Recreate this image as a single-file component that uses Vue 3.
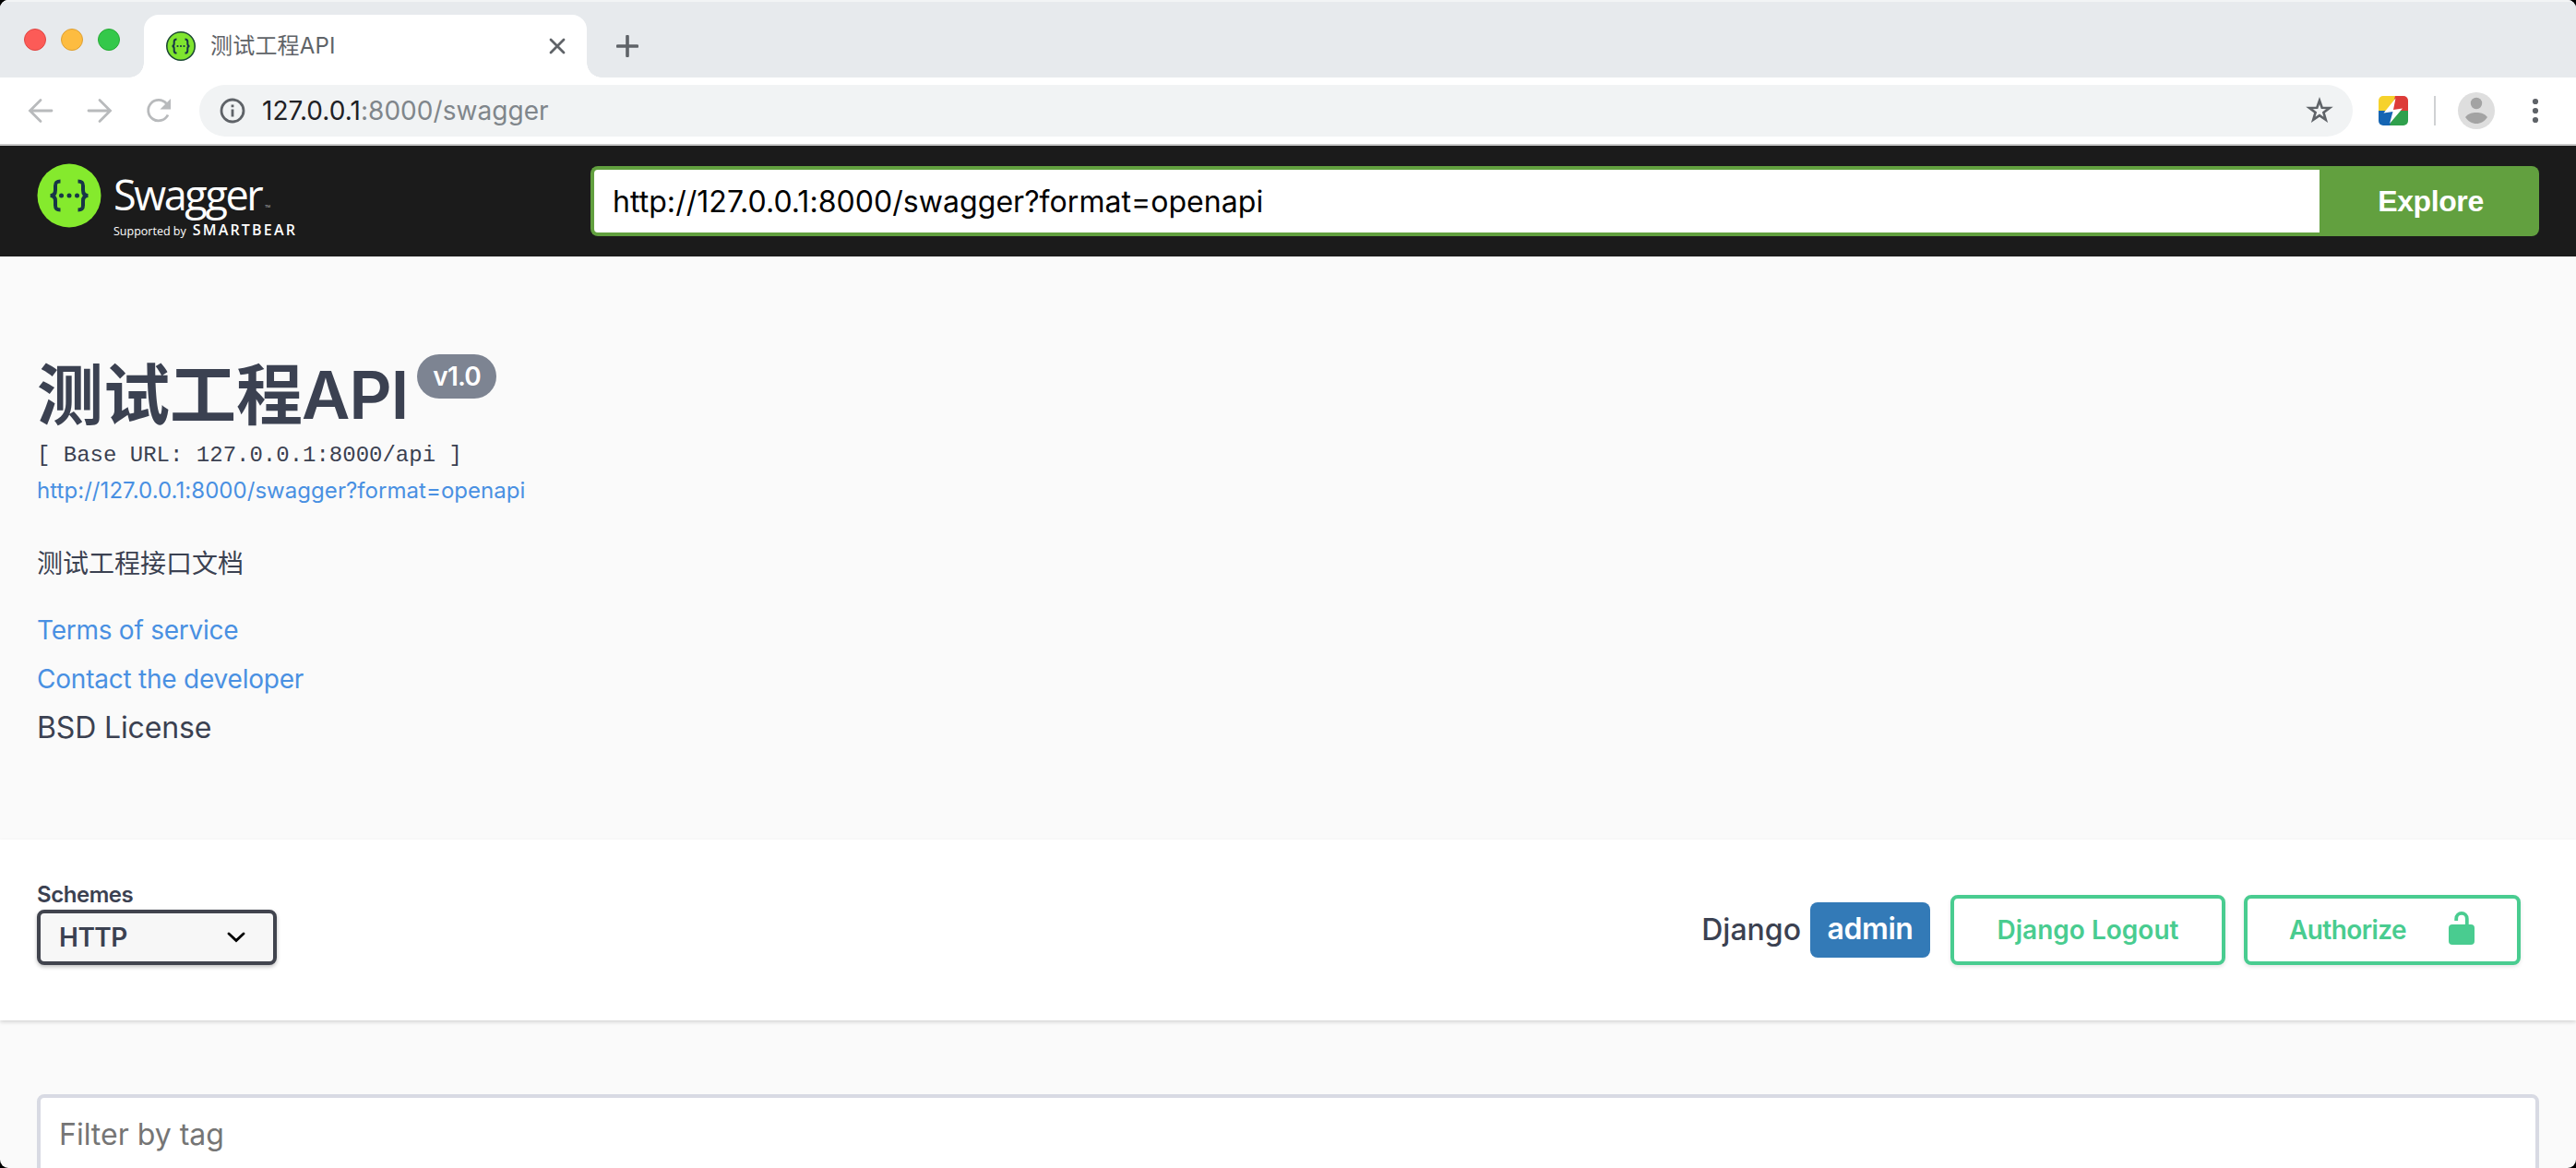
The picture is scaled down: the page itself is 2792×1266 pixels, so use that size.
<template>
  <div class="window">
    <div class="tab-strip">
      <div class="lights">
        <span class="light red"></span>
        <span class="light yellow"></span>
        <span class="light green"></span>
      </div>
      <div class="tab">
        <svg class="favicon" viewBox="0 0 34 34">
          <circle cx="17" cy="17" r="15.2" fill="#7fe52f" stroke="#1d4a35" stroke-width="1.6" />
          <g fill="none" stroke="#173647" stroke-width="2">
            <path d="M12.500 9.500c-2.600 0-2.800 1-2.800 2.600v2.200c0 1.600-.5 2.700-2.200 2.700 1.700 0 2.200 1.100 2.200 2.700v2.200c0 1.600.2 2.600 2.800 2.600" />
            <path d="M21.500 9.500c2.600 0 2.800 1 2.800 2.600v2.200c0 1.600.5 2.700 2.200 2.700-1.700 0-2.200 1.100-2.200 2.700v2.200c0 1.600-.2 2.600-2.800 2.600" />
          </g>
          <g fill="#173647">
            <circle cx="13.500" cy="17" r="1.100" />
            <circle cx="17" cy="17" r="1.100" />
            <circle cx="20.500" cy="17" r="1.100" />
          </g>
        </svg>
        <span class="tab-title">测试工程API</span>
        <svg class="tab-close" viewBox="0 0 18 18">
          <path d="M2 2l14 14M16 2L2 16" stroke="#5f6368" stroke-width="2.800" stroke-linecap="round" />
        </svg>
      </div>
      <svg class="new-tab" viewBox="0 0 24 24">
        <path d="M12 1.500v21M1.500 12h21" stroke="#5f6368" stroke-width="3.600" stroke-linecap="round" />
      </svg>
    </div>

    <div class="toolbar">
      <svg class="nav" viewBox="0 0 28 28">
        <path d="M26 14H3M14 2.500L2.500 14 14 25.500" fill="none" stroke="#b8babc" stroke-width="2.800" stroke-linecap="round" />
      </svg>
      <svg class="nav" viewBox="0 0 28 28">
        <path d="M2 14h23M14 2.500L25.500 14 14 25.500" fill="none" stroke="#b8babc" stroke-width="2.800" stroke-linecap="round" />
      </svg>
      <svg class="nav" viewBox="0 0 28 28">
        <path d="M24 18.500A11.200 11.200 0 1 1 22.500 6.500" fill="none" stroke="#b8babc" stroke-width="2.800" />
        <path d="M27 1v11.500H15.500z" fill="#b8babc" />
      </svg>
      <div class="omnibox">
        <svg class="info-icon" viewBox="0 0 28 28">
          <circle cx="14" cy="14" r="12" fill="none" stroke="#5f6368" stroke-width="2.800" />
          <path d="M14 12.500v8M14 7.500v2.800" stroke="#5f6368" stroke-width="2.800" />
        </svg>
        <span class="address">127.0.0.1<span class="address-rest">:8000/swagger</span></span>
        <svg class="star" viewBox="0 0 30 30">
          <path d="M15 4l2.700 7.700 8.300.2-6.600 5 2.400 8L15 20.200l-6.800 4.700 2.400-8-6.600-5 8.300-.2z" fill="none" stroke="#5f6368" stroke-width="2.600" />
        </svg>
      </div>
      <svg class="extension" viewBox="0 0 32 32">
        <clipPath id="ext"><rect width="32" height="32" rx="5" /></clipPath>
        <g clip-path="url(#ext)">
          <path d="M0 0h19v16H0z" fill="#f6d22b" />
          <path d="M18 0h14v16H14z" fill="#dd3b38" />
          <path d="M0 16h16v16H0z" fill="#1565b3" />
          <path d="M18 16h14v16H12z" fill="#2fa04c" />
          <path d="M18.500 2.500L5.500 18.500l10-1.500L12 30l14-16.500-10 1.500z" fill="#fff" />
        </g>
      </svg>
      <span class="divider"></span>
      <svg class="avatar" viewBox="0 0 40 40">
        <circle cx="20" cy="20" r="20" fill="#dedede" />
        <circle cx="20" cy="12" r="6.200" fill="#a3a3a3" />
        <path d="M8 27c3-3.800 7.500-5 12-5s9 1.200 12 5c-3 4.500-7.500 7-12 7s-9-2.500-12-7z" fill="#a3a3a3" />
      </svg>
      <svg class="more" viewBox="0 0 8 28">
        <circle cx="4" cy="4" r="3.100" />
        <circle cx="4" cy="14" r="3.100" />
        <circle cx="4" cy="24" r="3.100" />
      </svg>
    </div>

    <div class="topbar">
      <div class="logo">
        <svg class="logo-mark" viewBox="0 0 70 70">
          <circle cx="35" cy="35" r="34.500" fill="#85ea2d" />
          <g fill="none" stroke="#173647" stroke-width="4">
            <path d="M25.500 19.500c-5 0-5.500 2-5.500 5v4.500c0 3.500-1.500 6-5.500 6 4 0 5.500 2.500 5.500 6v4.500c0 3 .5 5 5.500 5" />
            <path d="M44.500 19.500c5 0 5.500 2 5.500 5v4.500c0 3.500 1.500 6 5.500 6-4 0-5.500 2.500-5.500 6v4.500c0 3-.5 5-5.500 5" />
          </g>
          <g fill="#173647">
            <circle cx="26.500" cy="35" r="2.500" />
            <circle cx="35" cy="35" r="2.500" />
            <circle cx="43.500" cy="35" r="2.500" />
          </g>
        </svg>
        <div class="logo-text">
          <div class="logo-name">Swagger<span class="tm">™</span></div>
          <div class="logo-sub">Supported by <span class="smartbear">SMARTBEAR</span></div>
        </div>
      </div>
      <div class="download-url">
        <input v-model="url" class="url-input" type="text" />
        <button class="explore">Explore</button>
      </div>
    </div>

    <div class="info">
      <div class="title-row">
        <h2 class="title">测试工程<span class="title-latin">API</span></h2>
        <span class="version">v1.0</span>
      </div>
      <pre class="base-url">[ Base URL: 127.0.0.1:8000/api ]</pre>
      <a class="link schema-link">{{ url }}</a>
      <p class="description">测试工程接口文档</p>
      <a class="link terms">Terms of service</a>
      <a class="link contact">Contact the developer</a>
      <div class="license">BSD License</div>
    </div>

    <div class="schemes">
      <div class="scheme-box">
        <span class="scheme-label">Schemes</span>
        <div class="scheme-select">
          <span class="scheme-value">HTTP</span>
          <svg class="chevron" viewBox="0 0 20 12">
            <path d="M2 2l8 7.500L18 2" fill="none" stroke="#000" stroke-width="2.800" stroke-linecap="round" />
          </svg>
        </div>
      </div>
      <div class="auth">
        <span class="django">Django</span>
        <span class="user">admin</span>
        <button class="btn logout"><span class="logout-text">Django Logout</span></button>
        <button class="btn authorize">
          <span class="authorize-text">Authorize</span>
          <svg class="lock" viewBox="0 0 28 36">
            <rect y="14" width="28" height="22" rx="4" fill="#49cc90" />
            <path d="M8.200 10V7.700a5.800 5.800 0 0 1 11.600 0V15" fill="none" stroke="#49cc90" stroke-width="3.800" />
          </svg>
        </button>
      </div>
    </div>

    <div class="filter">
      <input class="filter-input" type="text" placeholder="Filter by tag" />
    </div>
  </div>
</template>

<script setup>
import { ref } from 'vue'

const url = ref('http://127.0.0.1:8000/swagger?format=openapi')
</script>

<style>
body {
  background: #000;
}
</style>

<style scoped>
* {
  box-sizing: border-box;
}
.window {
  width: 2792px;
  height: 1266px;
  overflow: hidden;
  display: flex;
  flex-direction: column;
  border-radius: 9px;
  background: #fafafa;
  color: #3b4151;
  font-family: Inter, 'Noto Sans CJK SC', sans-serif;
}
svg {
  display: block;
  flex: none;
}
span {
  white-space: nowrap;
}

/* tab strip */
.tab-strip {
  height: 84px;
  flex: none;
  display: flex;
  align-items: flex-end;
  background: #e7eaed;
  border-top: 2px solid #f2f4f5;
}
.lights {
  display: flex;
  gap: 16px;
  width: 156px;
  padding-left: 26px;
  align-self: flex-start;
  padding-top: 29px;
}
.light {
  width: 24px;
  height: 24px;
  border-radius: 50%;
}
.red {
  background: #fc5b57;
  border: 1px solid #df4744;
}
.yellow {
  background: #fdbc40;
  border: 1px solid #dea034;
}
.green {
  background: #34c84a;
  border: 1px solid #27aa35;
}
.tab {
  position: relative;
  width: 480px;
  height: 68px;
  padding: 0 23px;
  display: flex;
  align-items: center;
  background: #fff;
  border-radius: 16px 16px 0 0;
}
.tab::before,
.tab::after {
  content: '';
  position: absolute;
  bottom: 0;
  width: 16px;
  height: 16px;
}
.tab::before {
  left: -16px;
  background: radial-gradient(circle at 0 0, transparent 15.5px, #fff 16px);
}
.tab::after {
  right: -16px;
  background: radial-gradient(circle at 100% 0, transparent 15.5px, #fff 16px);
}
.favicon {
  width: 34px;
  height: 34px;
}
.tab-title {
  flex: 1;
  margin-left: 15px;
  font-size: 24px;
  line-height: 34px;
  letter-spacing: 0.2px;
  color: #5f6368;
}
.tab-close {
  width: 18px;
  height: 18px;
}
.new-tab {
  width: 24px;
  height: 24px;
  margin: 0 0 22px 32px;
}

/* toolbar */
.toolbar {
  height: 74px;
  flex: none;
  display: flex;
  align-items: center;
  background: #fff;
  padding: 0 40px 0 30px;
  border-bottom: 2px solid #c8c8c8;
}
.nav {
  width: 28px;
  height: 28px;
  margin-right: 36px;
}
.omnibox {
  width: 2335px;
  height: 56px;
  margin-left: -6px;
  padding: 0 21px 0 22px;
  display: flex;
  align-items: center;
  background: #f1f3f4;
  border-radius: 28px;
}
.info-icon {
  width: 28px;
  height: 28px;
}
.address {
  flex: 1;
  margin-left: 18px;
  font-size: 28px;
  letter-spacing: 0.05px;
  color: #202124;
}
.address-rest {
  color: #80868b;
}
.star {
  width: 30px;
  height: 30px;
}
.extension {
  width: 32px;
  height: 32px;
  margin-left: 28px;
}
.divider {
  width: 2px;
  height: 32px;
  margin-left: 28px;
  background: #cfd1d3;
}
.avatar {
  width: 40px;
  height: 40px;
  margin-left: 24px;
}
.more {
  width: 8px;
  height: 28px;
  margin-left: 40px;
  fill: #5f6368;
}

/* swagger top bar */
.topbar {
  height: 120px;
  flex: none;
  display: flex;
  align-items: center;
  justify-content: space-between;
  padding: 0 40px;
  background: #1b1b1b;
}
.logo {
  display: flex;
  height: 80px;
}
.logo-mark {
  width: 70px;
  height: 70px;
  margin-top: -1px;
}
.logo-text {
  margin-left: 13px;
  font-family: 'Open Sans', 'Noto Sans', sans-serif;
  color: #fff;
}
.logo-name {
  height: 59px;
  margin-top: 3px;
  font-size: 45px;
  line-height: 59px;
  letter-spacing: -2.4px;
}
.tm {
  margin-left: 4px;
  font-size: 8px;
  letter-spacing: 0;
  color: #aaa;
}
.logo-sub {
  display: flex;
  align-items: baseline;
  font-size: 12.5px;
  line-height: 18px;
}
.smartbear {
  margin-left: 7px;
  font-size: 16px;
  font-weight: 600;
  letter-spacing: 2.2px;
}
.download-url {
  display: flex;
  width: 2112px;
  height: 76px;
}
.url-input {
  flex: 1;
  padding: 0 20px;
  border: 4px solid #62a03f;
  border-right: none;
  border-radius: 8px 0 0 8px;
  outline: none;
  background: #fff;
  color: #000;
  font-family: inherit;
  font-size: 32px;
  letter-spacing: 0.05px;
}
.explore {
  width: 238px;
  padding: 0 0 0 3px;
  border: none;
  border-radius: 0 8px 8px 0;
  background: #62a03f;
  color: #fff;
  font-family: 'Liberation Sans', sans-serif;
  font-size: 32px;
  font-weight: 700;
  letter-spacing: -0.4px;
}

/* api info */
.info {
  height: 632px;
  flex: none;
  display: flex;
  flex-direction: column;
  align-items: flex-start;
  padding: 98px 40px 0;
}
.title-row {
  display: flex;
  align-items: flex-start;
}
.title {
  margin: 0;
  font-size: 72px;
  line-height: 104px;
  font-weight: 700;
}
.title-latin {
  margin-left: -1px;
  font-weight: 600;
  letter-spacing: -1.2px;
}
.version {
  margin: 8px 0 0 10px;
  width: 86px;
  height: 48px;
  border-radius: 24px;
  background: #7d8492;
  color: #fff;
  text-align: center;
  font-size: 28px;
  line-height: 48px;
  font-weight: 600;
  letter-spacing: -0.8px;
}
.base-url {
  margin: -2px 0 0;
  font-family: 'Liberation Mono', monospace;
  font-size: 24px;
  line-height: 32px;
}
.link {
  color: #4990e2;
  white-space: nowrap;
}
.schema-link {
  margin-top: 4px;
  font-size: 24px;
  line-height: 36px;
  letter-spacing: 0.05px;
}
.description {
  margin: 41px 0 0;
  font-size: 28px;
  line-height: 40px;
}
.terms {
  margin-top: 32px;
  font-size: 28px;
  line-height: 40px;
  letter-spacing: -0.25px;
}
.contact {
  margin-top: 13px;
  font-size: 28px;
  line-height: 40px;
  letter-spacing: -0.22px;
}
.license {
  margin-top: 13px;
  font-size: 32px;
  line-height: 40px;
  letter-spacing: -0.15px;
}

/* schemes */
.schemes {
  height: 196px;
  flex: none;
  display: flex;
  justify-content: space-between;
  padding: 60px 60px 0 40px;
  background: #fff;
  box-shadow: 0 2px 4px rgba(0, 0, 0, 0.15);
}
.scheme-box {
  display: flex;
  flex-direction: column;
  margin-top: -10px;
}
.scheme-label {
  height: 26px;
  font-size: 24px;
  line-height: 20px;
  font-weight: 600;
  letter-spacing: -0.45px;
}
.scheme-select {
  width: 260px;
  height: 60px;
  padding: 0 30px 0 20px;
  display: flex;
  align-items: center;
  justify-content: space-between;
  border: 4px solid #41444e;
  border-radius: 8px;
  background: #f7f7f7;
  box-shadow: 0 2px 4px rgba(0, 0, 0, 0.25);
}
.scheme-value {
  font-size: 28px;
  font-weight: 600;
  letter-spacing: -0.5px;
}
.chevron {
  width: 20px;
  height: 12px;
}
.auth {
  display: flex;
  align-items: center;
  height: 76px;
}
.django {
  margin-top: -2px;
  font-size: 32px;
  font-weight: 500;
}
.user {
  width: 130px;
  height: 60px;
  margin-left: 10px;
  border-radius: 8px;
  background: #337ab7;
  color: #fff;
  text-align: center;
  font-size: 32px;
  line-height: 58px;
  font-weight: 600;
  letter-spacing: -0.4px;
}
.btn {
  height: 76px;
  padding: 0;
  display: flex;
  align-items: center;
  border: 4px solid #49cc90;
  border-radius: 8px;
  background: #fff;
  box-shadow: 0 2px 4px rgba(0, 0, 0, 0.1);
  color: #49cc90;
  font-family: inherit;
  font-size: 28px;
  font-weight: 600;
}
.logout {
  width: 298px;
  margin-left: 22px;
  justify-content: center;
}
.authorize {
  width: 300px;
  margin-left: 20px;
  padding: 0 46px 0 45px;
  justify-content: space-between;
}
.authorize-text {
  letter-spacing: -0.6px;
}
.lock {
  width: 28px;
  height: 36px;
  margin-top: -4px;
}

/* filter */
.filter {
  padding: 80px 40px 0;
}
.filter-input {
  display: block;
  width: 100%;
  height: 104px;
  padding: 0 20px 18px;
  border: 4px solid #d8dae3;
  border-radius: 8px;
  background: #fff;
  font-family: inherit;
  font-size: 32px;
}
.filter-input::placeholder {
  color: #757575;
}
</style>
